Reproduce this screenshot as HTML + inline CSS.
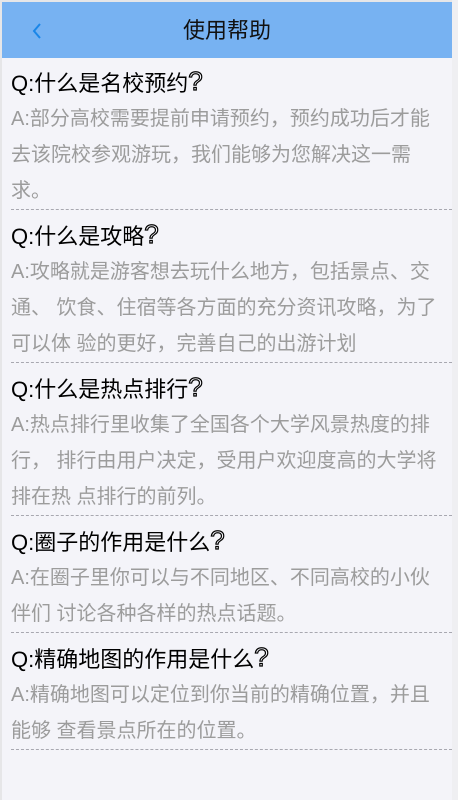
<!DOCTYPE html>
<html><head><meta charset="utf-8">
<style>
html,body{margin:0;padding:0;}
body{width:458px;height:800px;background:#f4f4f9;position:relative;overflow:hidden;font-family:"Liberation Sans","Noto Sans CJK SC",sans-serif;}
.lstrip{position:absolute;left:0;top:0;width:2px;height:800px;background:#e6e6e8;}
.rstrip{position:absolute;left:452px;top:0;width:6px;height:800px;background:#efeff2;}
.topstrip{position:absolute;left:0;top:0;width:458px;height:2px;background:#e6e6e8;}
.hdr{position:absolute;left:2px;top:2px;width:450px;height:56px;background:#77b2f2;}
.hdr .t{position:absolute;left:0;right:0;top:0;line-height:58px;text-align:center;font-size:22px;color:#111;}
.hdr svg{position:absolute;left:29px;top:20px;}
.list{position:absolute;left:11px;top:57px;width:441px;}
.item{border-bottom:1px dashed #a8a8b0;}
.q{padding-top:10px;height:34px;line-height:34px;font-size:22px;color:#000;white-space:nowrap;}
.qm{display:inline-block;color:transparent;-webkit-text-stroke:1.2px #000;font-size:26px;line-height:34px;vertical-align:top;margin-top:-3px;}
.a{line-height:36px;font-size:20px;color:#9c9c9c;white-space:nowrap;}
</style></head><body>
<div class="topstrip"></div><div class="lstrip"></div><div class="rstrip"></div>
<div class="hdr"><svg width="12" height="18" viewBox="0 0 12 18"><path d="M9 2 L3 9 L9 16" fill="none" stroke="#1a86e8" stroke-width="2"/></svg><div class="t">使用帮助</div></div>
<div class="list">
<div class="item"><div class="q">Q:什么是名校预约<span class="qm">?</span></div><div class="a">A:部分高校需要提前申请预约，预约成功后才能<br>去该院校参观游玩，我们能够为您解决这一需<br>求。</div></div>
<div class="item"><div class="q">Q:什么是攻略<span class="qm">?</span></div><div class="a">A:攻略就是游客想去玩什么地方，包括景点、交<br>通、 饮食、住宿等各方面的充分资讯攻略，为了<br>可以体 验的更好，完善自己的出游计划</div></div>
<div class="item"><div class="q">Q:什么是热点排行<span class="qm">?</span></div><div class="a">A:热点排行里收集了全国各个大学风景热度的排<br>行， 排行由用户决定，受用户欢迎度高的大学将<br>排在热 点排行的前列。</div></div>
<div class="item"><div class="q">Q:圈子的作用是什么<span class="qm">?</span></div><div class="a">A:在圈子里你可以与不同地区、不同高校的小伙<br>伴们 讨论各种各样的热点话题。</div></div>
<div class="item"><div class="q">Q:精确地图的作用是什么<span class="qm">?</span></div><div class="a">A:精确地图可以定位到你当前的精确位置，并且<br>能够 查看景点所在的位置。</div></div>
</div>
</body></html>
